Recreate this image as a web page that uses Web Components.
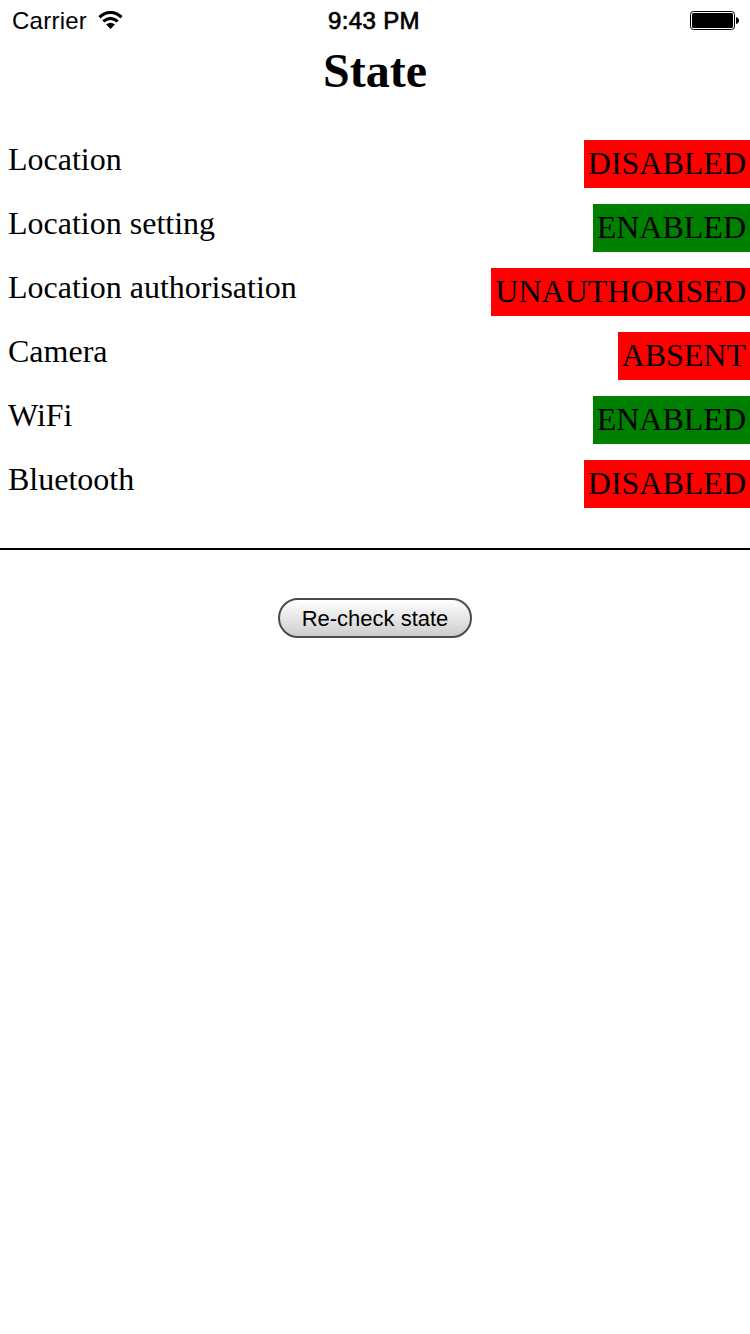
<!DOCTYPE html>
<html lang="en">
<head>
<meta charset="utf-8">
<title>State</title>
<style>
html, body { margin: 0; background: #fff; color: #000; }
body { font-family: "Liberation Serif", "Times New Roman", serif; font-size: 32px; height: 1334px; overflow: hidden; }
</style>
</head>
<body>
<state-screen></state-screen>
<script>
function define(name, html) {
  const template = document.createElement('template');
  template.innerHTML = html;
  customElements.define(name, class extends HTMLElement {
    constructor() {
      super();
      this.attachShadow({ mode: 'open' }).append(template.content.cloneNode(true));
    }
  });
}

define('status-bar', `
<style>
:host { display: grid; grid-template-columns: 1fr auto 1fr; align-items: center; height: 42px; box-sizing: border-box; padding: 0 10px 0 12px; font: 24px/42px "Liberation Sans", Arial, sans-serif; }
.carrier { display: flex; align-items: center; gap: 11px; letter-spacing: .25px; }
.carrier svg { margin-bottom: 2px; }
.time { letter-spacing: .35px; -webkit-text-stroke: .7px #000; margin-right: 4px; white-space: nowrap; }
.battery { justify-self: end; }
svg { display: block; }
</style>
<div class="carrier"><span>Carrier</span>
<svg width="26" height="18" viewBox="0 0 26 18"><g fill="none" stroke="#000" stroke-width="3.1"><path d="M1.4 6.2Q12.5-3.2 23.6 6.2"/><path d="M5.3 10.4Q12.5 4.2 19.7 10.4"/></g><path d="M8.1 13.6Q12.5 9.8 16.9 13.6L12.5 18Z"/></svg></div>
<span class="time">9:43 PM</span>
<svg class="battery" width="50" height="20" viewBox="0 0 50 20"><rect x=".5" y=".5" width="44" height="18" rx="3" fill="none" stroke="#000"/><rect x="2" y="2" width="41" height="15" rx="1.5"/><path d="M46 6Q49 7 49 9.5T46 13Z"/></svg>
`);

define('page-heading', `
<style>
:host { display: block; }
h1 { margin: 0; font-size: 48px; line-height: 58px; text-align: center; }
</style>
<h1><slot></slot></h1>
`);

define('state-badge', `
<style>
:host { display: block; box-sizing: border-box; height: 48px; padding: 4px; line-height: 38px; background: red; }
:host([on]) { background: green; }
</style>
<slot></slot>
`);

define('state-row', `
<style>
:host { display: flex; justify-content: space-between; align-items: flex-start; height: 48px; padding-left: 8px; }
.label { line-height: 38px; }
</style>
<span class="label"><slot></slot></span><slot name="value"></slot>
`);

define('state-list', `
<style>
:host { display: flex; flex-direction: column; gap: 16px; padding: 40px 0; border-bottom: 2px solid #000; }
</style>
<slot></slot>
`);

define('pill-button', `
<style>
:host { display: block; }
button { display: block; box-sizing: border-box; width: 194px; height: 40px; padding: 2px 0 0; border: 2px solid #4c4c4c; border-radius: 20px; background: linear-gradient(#fff, #cdcdcd); color: #000; font: 22px/34px "Liberation Sans", Arial, sans-serif; }
</style>
<button type="button"><slot></slot></button>
`);

define('state-screen', `
<style>
:host { display: flex; flex-direction: column; }
pill-button { align-self: center; margin-top: 48px; }
</style>
<status-bar></status-bar>
<page-heading>State</page-heading>
<state-list>
<state-row>Location<state-badge slot="value">DISABLED</state-badge></state-row>
<state-row>Location setting<state-badge slot="value" on>ENABLED</state-badge></state-row>
<state-row>Location authorisation<state-badge slot="value">UNAUTHORISED</state-badge></state-row>
<state-row>Camera<state-badge slot="value">ABSENT</state-badge></state-row>
<state-row>WiFi<state-badge slot="value" on>ENABLED</state-badge></state-row>
<state-row>Bluetooth<state-badge slot="value">DISABLED</state-badge></state-row>
</state-list>
<pill-button>Re-check state</pill-button>
`);
</script>
</body>
</html>
